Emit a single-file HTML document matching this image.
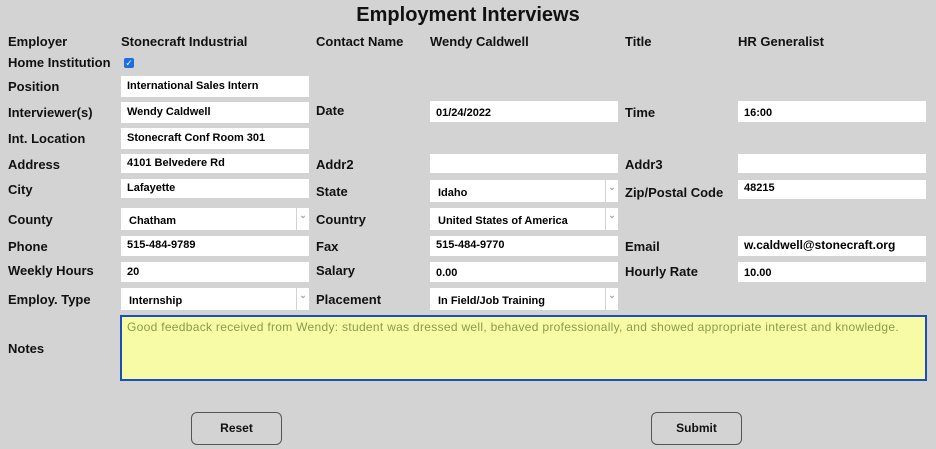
<!DOCTYPE html>
<html><head><meta charset="utf-8"><style>
body{margin:0;width:936px;height:449px;background:#d3d3d3;font-family:"Liberation Sans",Arial,sans-serif;position:relative;overflow:hidden}
.t{position:absolute;left:0;width:936px;top:4px;text-align:center;font-size:20px;font-weight:bold;color:#111}
.l{position:absolute;font-size:13px;font-weight:bold;color:#111;white-space:nowrap}
.i{position:absolute;background:#fff;font-size:11px;font-weight:bold;color:#000;box-sizing:border-box;padding-left:6px;white-space:nowrap}
.s{position:absolute;background:#fff;font-size:11px;font-weight:bold;color:#000;box-sizing:border-box;padding-left:8px;white-space:nowrap}
.s:after{content:"⌄";position:absolute;right:0;top:0;width:12px;height:100%;background:#fff;border-left:1px solid #d3d3d3;color:#aaa;font-size:9px;text-align:center;line-height:14px}
.b{position:absolute;width:91px;height:33px;border:1px solid #555;border-radius:6px;box-sizing:border-box;font-size:12px;font-weight:bold;text-align:center;line-height:31px;color:#111}
</style></head><body>
<div class="t">Employment Interviews</div>
<div class="l" style="left:8px;top:34px">Employer</div>
<div class="l" style="left:121px;top:34px">Stonecraft Industrial</div>
<div class="l" style="left:316px;top:34px">Contact Name</div>
<div class="l" style="left:430px;top:34px">Wendy Caldwell</div>
<div class="l" style="left:625px;top:34px">Title</div>
<div class="l" style="left:738px;top:34px">HR Generalist</div>
<div class="l" style="left:8px;top:55px">Home Institution</div>
<div style="position:absolute;left:124px;top:58px;width:10px;height:10px;background:#1a6fe0;border-radius:2px;color:#fff;font-size:9px;line-height:10px;text-align:center">✓</div>

<div class="l" style="left:8px;top:79px">Position</div>
<div class="i" style="left:121px;top:76px;width:188px;height:21px;line-height:21px">International Sales Intern</div>

<div class="l" style="left:8px;top:105px">Interviewer(s)</div>
<div class="i" style="left:121px;top:102px;width:188px;height:21px;line-height:21px">Wendy Caldwell</div>
<div class="l" style="left:316px;top:103px">Date</div>
<div class="i" style="left:430px;top:101px;width:188px;height:21px;line-height:24px">01/24/2022</div>
<div class="l" style="left:625px;top:105px">Time</div>
<div class="i" style="left:738px;top:101px;width:188px;height:21px;line-height:24px">16:00</div>

<div class="l" style="left:8px;top:131px">Int. Location</div>
<div class="i" style="left:121px;top:128px;width:188px;height:21px;line-height:21px">Stonecraft Conf Room 301</div>

<div class="l" style="left:8px;top:157px">Address</div>
<div class="i" style="left:121px;top:154px;width:188px;height:19px;line-height:18px">4101 Belvedere Rd</div>
<div class="l" style="left:316px;top:157px">Addr2</div>
<div class="i" style="left:430px;top:154px;width:188px;height:19px"></div>
<div class="l" style="left:625px;top:157px">Addr3</div>
<div class="i" style="left:738px;top:154px;width:188px;height:19px"></div>

<div class="l" style="left:8px;top:182px">City</div>
<div class="i" style="left:121px;top:179px;width:188px;height:19px;line-height:18px">Lafayette</div>
<div class="l" style="left:316px;top:184px">State</div>
<div class="s" style="left:430px;top:180px;width:188px;height:22px;line-height:26px">Idaho</div>
<div class="l" style="left:625px;top:185px">Zip/Postal Code</div>
<div class="i" style="left:738px;top:180px;width:188px;height:19px;line-height:16px">48215</div>

<div class="l" style="left:8px;top:212px">County</div>
<div class="s" style="left:121px;top:208px;width:188px;height:22px;line-height:26px">Chatham</div>
<div class="l" style="left:316px;top:212px">Country</div>
<div class="s" style="left:430px;top:208px;width:188px;height:22px;line-height:26px">United States of America</div>

<div class="l" style="left:8px;top:239px">Phone</div>
<div class="i" style="left:121px;top:236px;width:188px;height:20px;line-height:18px">515-484-9789</div>
<div class="l" style="left:316px;top:239px">Fax</div>
<div class="i" style="left:430px;top:236px;width:188px;height:20px;line-height:18px">515-484-9770</div>
<div class="l" style="left:625px;top:239px">Email</div>
<div class="i" style="left:738px;top:236px;width:188px;height:20px;line-height:18px;font-size:12px">w.caldwell@stonecraft.org</div>

<div class="l" style="left:8px;top:263px">Weekly Hours</div>
<div class="i" style="left:121px;top:262px;width:188px;height:20px;line-height:20px">20</div>
<div class="l" style="left:316px;top:263px">Salary</div>
<div class="i" style="left:430px;top:262px;width:188px;height:20px;line-height:22px">0.00</div>
<div class="l" style="left:625px;top:264px">Hourly Rate</div>
<div class="i" style="left:738px;top:262px;width:188px;height:20px;line-height:22px">10.00</div>

<div class="l" style="left:8px;top:292px">Employ. Type</div>
<div class="s" style="left:121px;top:288px;width:188px;height:22px;line-height:26px">Internship</div>
<div class="l" style="left:316px;top:292px">Placement</div>
<div class="s" style="left:430px;top:288px;width:188px;height:22px;line-height:26px">In Field/Job Training</div>

<div class="l" style="left:8px;top:341px">Notes</div>
<div style="position:absolute;left:120px;top:315px;width:807px;height:66px;box-sizing:border-box;border:2px solid #1a4fb5;background:#f8fba6;color:#8a9a4c;font-size:12px;letter-spacing:0.3px;padding:3px 0 0 5px;white-space:nowrap">Good feedback received from Wendy: student was dressed well, behaved professionally, and showed appropriate interest and knowledge.</div>

<div class="b" style="left:191px;top:412px">Reset</div>
<div class="b" style="left:651px;top:412px">Submit</div>
</body></html>
